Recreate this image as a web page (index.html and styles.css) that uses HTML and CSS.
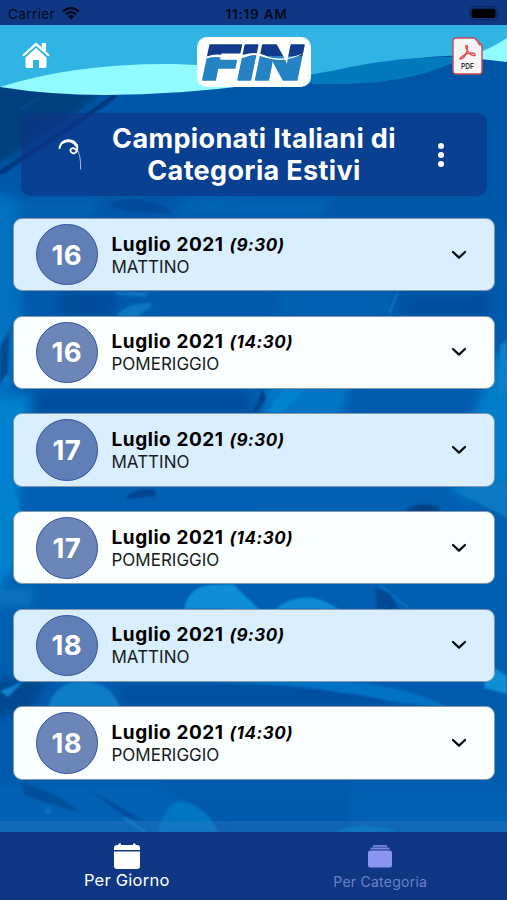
FILE: index.html
```
<!DOCTYPE html>
<html lang="it">
<head>
    <meta charset="UTF-8">
    <meta name="viewport" content="width=device-width, initial-scale=1.0">
    <title>Campionati Italiani di Categoria Estivi</title>
    <link rel="stylesheet" href="styles.css">
</head>
<body>
    <div class="app">
        <!-- Painted water backdrop and header waves -->
        <svg class="backdrop" viewBox="0 0 507 900" preserveAspectRatio="none" aria-hidden="true">
            <defs>
                <linearGradient id="water" x1="0" y1="0" x2="0" y2="1">
                    <stop offset="0" stop-color="#0054a4"/>
                    <stop offset=".25" stop-color="#0058aa"/>
                    <stop offset=".55" stop-color="#0260b2"/>
                    <stop offset="1" stop-color="#0058ab"/>
                </linearGradient>
                <filter id="soft" x="-20%" y="-20%" width="140%" height="140%"><feGaussianBlur stdDeviation="5"/></filter>
                <filter id="edge"><feGaussianBlur stdDeviation="0.8"/></filter>
            </defs>
            <rect width="507" height="900" fill="url(#water)"/>
            <g filter="url(#soft)">
                <path d="M-10 80H112L66 125 -10 170Z" fill="#00407f"/>
                <path d="M-10 190L18 200 22 310 10 410 -10 460Z" fill="#0470bf"/>
                <path d="M20 200L100 200 90 218 20 218Z" fill="#0462b2"/>
                <path d="M190 196L330 200 320 218H170Z" fill="#0263b4"/>
                <path d="M60 292H115V316H60Z" fill="#004c9b"/>
                <path d="M35 390H250V413H35Z" fill="#014f9f"/>
                <path d="M268 385L350 387 340 416 262 415Z" fill="#0577c6"/>
                <path d="M350 387H480V414H350Z" fill="#015cad"/>
                <path d="M-10 400L30 395 18 500 20 560 -10 600Z" fill="#0580cd"/>
                <path d="M495 350L517 370V480L470 500 450 488Z" fill="#057bc9"/>
                <path d="M-10 590L35 588 30 606H-10Z" fill="#0773bf"/>
                <path d="M-10 680L50 678 30 710 -10 720Z" fill="#004a8e"/>
                <path d="M120 684L360 684 400 706 120 706Z" fill="#014f9f"/>
                <path d="M-10 785L160 785 220 832H-10Z" fill="#0262b4"/>
                <path d="M280 293L390 290 390 315 280 315Z" fill="#0262b3"/>
                <path d="M400 293H490V316H400Z" fill="#014f9f"/>
                <path d="M350 783H517V832H350Z" fill="#0260b2"/>
            </g>
            <g filter="url(#edge)">
                <path d="M116 95L66 130 0 173" fill="none" stroke="#003474" stroke-width="4"/>
                <path d="M104 97L50 131 0 165M40 97L20 110" fill="none" stroke="#07569e" stroke-width="1.2"/>
                <path d="M108 205Q125 195 148 201Q166 205 172 213L130 212Z" fill="#004c9a"/>
                <path d="M116 316Q128 302 152 303L150 308 136 317Z" fill="#0877c1"/>
                <path d="M115 292H150L145 297 118 295Z" fill="#0872bd"/>
                <path d="M398 292L389 314M9 328Q-2 350 6 382" fill="none" stroke="#1587cc" stroke-width="1.2"/>
                <path d="M10 327L0 348V384L8 372Z" fill="#014b91"/>
                <path d="M262 388L266 398 258 412H252L258 402Z" fill="#003f89"/>
                <path d="M284 389L304 391 282 412H268Z" fill="#0583cd"/>
                <path d="M500 345L507 340V390L498 398Z" fill="#087fcb"/>
                <path d="M126 497Q142 485 156 491L155 496 128 499Z" fill="#004590"/>
                <path d="M404 511Q418 500 440 507L438 513Z" fill="#004283"/>
                <path d="M452 490L507 480V518L492 510Z" fill="#0779c5"/>
                <path d="M0 480Q20 490 20 515L8 530 0 532Z" fill="#0682cd"/>
                <path d="M184 609Q188 587 210 585L233 584 260 610Z" fill="#078dd7"/>
                <path d="M275 609Q305 585 340 610Z" fill="#078bd7"/>
                <path d="M212 586L240 609M226 585L257 609M380 585L408 608" fill="none" stroke="#1c95d9" stroke-width="1"/>
                <path d="M375 588L390 593 398 609H377Z" fill="#004892"/>
                <path d="M48 708Q54 682 82 681Q111 681 120 708Z" fill="#087bc4"/>
                <path d="M205 682Q375 668 448 708L390 701Q300 682 205 682Z" fill="#0472c3"/>
                <path d="M488 664L507 676V694L484 688Z" fill="#0b8ed6"/>
                <path d="M0 691L24 681 8 697Z" fill="#0a81cc"/>
                <path d="M22 783Q60 793 80 813L60 807 24 795Z" fill="#014f9a"/>
                <path d="M90 790L146 822 125 817Z" fill="#014e9c"/>
                <path d="M158 832Q166 802 181 801Q202 803 219 832Z" fill="#0475c2"/>
                <path d="M336 832Q361 819 398 832Z" fill="#0678bf"/>
                <circle cx="48" cy="811" r="3.5" fill="#0771bd"/>
                <path d="M124 818L145 832" fill="none" stroke="#0c7bc5" stroke-width="3"/>
            </g>
            <rect y="821" width="507" height="11" fill="#3c7fc4" opacity=".28"/>
            <path d="M0 25H507V58Q455 52 400 61L311 76 230 86 0 87Z" fill="#2fb4e4"/>
            <path d="M0 87Q75 63 175 64L260 68V84Q180 95 105 95Q50 95 0 87Z" fill="#91fbff"/>
            <path d="M260 82Q315 75 350 67Q405 56 452 57L507 58V62L482 58 455 62Q425 76 386 81Q340 87 290 82Z" fill="#0278bd"/>
            <path d="M455 62L483 58 507 62V70H440Z" fill="#0055a5"/>
            <path d="M475 54Q490 49 507 38V62L480 59Z" fill="#91fbff"/>
        </svg>

        <div class="status-bar">
            <div class="carrier">
                <span>Carrier</span>
                <svg width="18" height="13" viewBox="0 0 18 13">
                    <path d="M1 4.4Q9-2.4 17 4.4M3.8 7.4Q9 3 14.2 7.4" fill="none" stroke="#020a1b" stroke-width="2.2"/>
                    <path d="M5.8 9.2Q9 6.6 12.2 9.2L9 12.5Z" fill="#020a1b"/>
                </svg>
            </div>
            <div class="clock">11:19 AM</div>
            <svg class="battery" width="31" height="15" viewBox="0 0 31 15">
                <rect x=".7" y=".7" width="27" height="13" rx="4" fill="none" stroke="#0b2860" stroke-width="1.3"/>
                <rect x="2.5" y="2.7" width="24" height="9.4" rx="2" fill="#000"/>
                <path d="M29 5Q31 7 29 10Z" fill="#0b2860"/>
            </svg>
        </div>

        <header class="header">
            <svg class="home-icon" width="30" height="28" viewBox="0 0 30 28" fill="#fff">
                <path d="M4.5 16.5L15 7 25.5 16.5V25Q25.5 27 23.5 27H18V20Q18 19 17 19H13Q12 19 12 20V27H6.5Q4.5 27 4.5 25Z"/>
                <path d="M1.3 14L14 2.2Q15 1.4 16 2.2L20.8 6.6V2H25V10.6L28.7 14 27.4 15.4 15 4.7 2.6 15.4Z"/>
            </svg>
            <div class="logo">
                <svg width="114" height="49" viewBox="0 0 114 49">
                    <defs>
                        <linearGradient id="logo-fill" gradientUnits="userSpaceOnUse" x1="0" y1="0" x2="0" y2="49">
                            <stop offset=".37" stop-color="#123b8d"/>
                            <stop offset=".37" stop-color="#2583c3"/>
                        </linearGradient>
                    </defs>
                    <text class="logo-text" x="6" y="41.5" textLength="99" lengthAdjust="spacingAndGlyphs" fill="url(#logo-fill)" stroke="url(#logo-fill)">FIN</text>
                    <path d="M10 18.5Q18 15 28 17.5Q38 20 45 17L52 15.5Q60 14 67 17Q83 25 107 15Q88 26 68 19.5Q56 15.5 49 19Q38 23 26 20Q17 18 10 20.5Z" fill="#fff"/>
                </svg>
            </div>
            <svg class="pdf-icon" width="32" height="38" viewBox="0 0 32 38">
                <path d="M4 1H22.5L30 8.5V34Q30 37 27 37H4Q1 37 1 34V4Q1 1 4 1Z" fill="#f5f5f6" stroke="#cf4652" stroke-width="1.4"/>
                <path d="M22.5 1L30 8.5H27Z" fill="#e25a60"/>
                <path d="M14.5 8.5C12.5 8.5 15 14 17.5 16.5S24 19.5 23 17.2 14 16 10 19.5 8.5 22.5 11 21 17.5 8.5 14.5 8.5Z" fill="none" stroke="#e34b4d" stroke-width="1.4"/>
                <text class="pdf-text" x="9" y="32" textLength="13" lengthAdjust="spacingAndGlyphs">PDF</text>
            </svg>
        </header>

        <section class="event-title">
            <svg class="swirl" width="26" height="34" viewBox="0 0 26 34" fill="none" stroke="#fff" stroke-linecap="round">
                <path d="M1.5 10Q3 2.5 10 2.2Q17 2 19 8" stroke-width="2"/>
                <path d="M5 5Q13 1 18 8" stroke-width="1.6"/>
                <path d="M19 7Q20.5 14 16 15.5Q12 15 12.5 11.5Q15 8 19 13" stroke-width="1.8"/>
                <path d="M18 10Q23.5 17 22.5 31" stroke-width=".9" opacity=".7"/>
            </svg>
            <h1>Campionati Italiani di<br>Categoria Estivi</h1>
            <div class="menu-dots"><span></span><span></span><span></span></div>
        </section>

        <main class="day-list">
            <div class="day-card morning">
                <div class="day-number">16</div>
                <div class="day-info">
                    <div class="day-date">Luglio 2021 <em>(9:30)</em></div>
                    <div class="day-part">MATTINO</div>
                </div>
                <svg class="chevron" width="16" height="10" viewBox="0 0 16 10"><path d="M2 2L8 7.6 14 2"/></svg>
            </div>
            <div class="day-card">
                <div class="day-number">16</div>
                <div class="day-info">
                    <div class="day-date">Luglio 2021 <em>(14:30)</em></div>
                    <div class="day-part">POMERIGGIO</div>
                </div>
                <svg class="chevron" width="16" height="10" viewBox="0 0 16 10"><path d="M2 2L8 7.6 14 2"/></svg>
            </div>
            <div class="day-card morning">
                <div class="day-number">17</div>
                <div class="day-info">
                    <div class="day-date">Luglio 2021 <em>(9:30)</em></div>
                    <div class="day-part">MATTINO</div>
                </div>
                <svg class="chevron" width="16" height="10" viewBox="0 0 16 10"><path d="M2 2L8 7.6 14 2"/></svg>
            </div>
            <div class="day-card">
                <div class="day-number">17</div>
                <div class="day-info">
                    <div class="day-date">Luglio 2021 <em>(14:30)</em></div>
                    <div class="day-part">POMERIGGIO</div>
                </div>
                <svg class="chevron" width="16" height="10" viewBox="0 0 16 10"><path d="M2 2L8 7.6 14 2"/></svg>
            </div>
            <div class="day-card morning">
                <div class="day-number">18</div>
                <div class="day-info">
                    <div class="day-date">Luglio 2021 <em>(9:30)</em></div>
                    <div class="day-part">MATTINO</div>
                </div>
                <svg class="chevron" width="16" height="10" viewBox="0 0 16 10"><path d="M2 2L8 7.6 14 2"/></svg>
            </div>
            <div class="day-card">
                <div class="day-number">18</div>
                <div class="day-info">
                    <div class="day-date">Luglio 2021 <em>(14:30)</em></div>
                    <div class="day-part">POMERIGGIO</div>
                </div>
                <svg class="chevron" width="16" height="10" viewBox="0 0 16 10"><path d="M2 2L8 7.6 14 2"/></svg>
            </div>
        </main>

        <nav class="tab-bar">
            <div class="tab active">
                <svg width="28" height="27" viewBox="0 0 28 27" fill="#fff">
                    <path d="M1 7V5Q1 2 4 2H5.5V.5H8V2H20V.5H22.5V2H24Q27 2 27 5V7Z"/>
                    <path d="M1 8.5H27V23Q27 26 24 26H4Q1 26 1 23Z"/>
                </svg>
                <span>Per Giorno</span>
            </div>
            <div class="tab">
                <svg width="26" height="24" viewBox="0 0 26 24">
                    <path d="M6 1H20V3H6Z" fill="#6f7bd0"/>
                    <path d="M4 3.5H22L23 5.5H3Z" fill="#7985dc"/>
                    <rect x="1" y="6.5" width="24" height="17" rx="2.5" fill="#8b95ef"/>
                </svg>
                <span>Per Categoria</span>
            </div>
        </nav>
    </div>
</body>
</html>
```
FILE: styles.css
```
* {
    box-sizing: border-box;
}

body {
    margin: 0;
    font-family: Inter, "Liberation Sans", sans-serif;
    background-color: #0058ab;
    color: #000;
}

svg {
    display: block;
    flex-shrink: 0;
}

.app {
    position: relative;
    isolation: isolate;
    display: flex;
    flex-direction: column;
    height: 900px;
    overflow: hidden;
}

.backdrop {
    position: absolute;
    top: 0;
    left: 0;
    width: 100%;
    height: 100%;
    z-index: -1;
}

.status-bar {
    display: grid;
    grid-template-columns: 1fr auto 1fr;
    align-items: center;
    height: 25px;
    padding: 2px 7px 0 8px;
    background-color: #103784;
    color: #020a1b;
    font-size: 13.5px;
    letter-spacing: 0.4px;
}

.carrier {
    display: flex;
    align-items: center;
    gap: 7px;
}

.clock {
    padding-left: 5px;
    font-size: 13.5px;
    font-weight: 600;
    letter-spacing: 0.8px;
}

.battery {
    justify-self: end;
}

.header {
    display: grid;
    grid-template-columns: 1fr auto 1fr;
    align-items: start;
    height: 88px;
    padding: 12px 23px 0 21px;
}

.home-icon {
    margin-top: 4px;
}

.logo {
    width: 114px;
    margin-left: 3px;
    border-radius: 10px;
    background-color: #fff;
}

.logo svg {
    margin-top: 1px;
    overflow: visible;
}

.logo-text {
    font-size: 48px;
    font-weight: 900;
    font-style: italic;
    stroke-width: 1.6;
    stroke-linejoin: round;
}

.pdf-icon {
    justify-self: end;
}

.pdf-text {
    font-size: 8px;
    font-weight: 600;
    fill: #333;
}

.event-title {
    display: flex;
    align-items: center;
    height: 83px;
    margin: 0 20px 0 21px;
    padding: 0 43px 0 37px;
    border-radius: 10px;
    background-color: rgba(14, 52, 134, 0.65);
}

.event-title h1 {
    flex: 1;
    margin: 0 14px 0 0;
    color: #fff;
    font-size: 27px;
    line-height: 32px;
    font-weight: 700;
    letter-spacing: 0.35px;
    text-align: center;
    white-space: nowrap;
}

.menu-dots {
    display: flex;
    flex-direction: column;
    gap: 3px;
}

.menu-dots span {
    width: 6px;
    height: 6px;
    border-radius: 50%;
    background-color: #fff;
}

.day-list {
    flex: 1;
    display: flex;
    flex-direction: column;
    gap: 24.3px;
    padding: 22px 12.5px 0 13px;
}

.day-card {
    display: flex;
    align-items: center;
    height: 73.4px;
    padding: 0 27px 0 22px;
    border: 1px solid #8399aa;
    border-radius: 9px;
    background-color: #fafeff;
}

.day-card.morning {
    background-color: #d9eeff;
}

.day-number {
    display: flex;
    align-items: center;
    justify-content: center;
    width: 61.5px;
    height: 61.5px;
    border: 1.5px solid #3452a0;
    border-radius: 50%;
    background-color: #6c86b8;
    color: #fff;
    font-size: 27.5px;
    font-weight: 700;
    letter-spacing: 0.3px;
}

.morning .day-number {
    background-color: #607fb7;
}

.day-info {
    flex: 1;
    padding-left: 14px;
}

.day-date {
    font-size: 19px;
    line-height: 23px;
    font-weight: 700;
    letter-spacing: 0.55px;
}

.day-date em {
    margin-left: 1px;
    font-size: 17px;
}

.day-part {
    color: #161c20;
    font-size: 17px;
    line-height: 20px;
}

.chevron {
    fill: none;
    stroke: #050a0e;
    stroke-width: 2.3;
    stroke-linecap: round;
    stroke-linejoin: round;
}

.tab-bar {
    display: grid;
    grid-template-columns: 1fr 1fr;
    height: 68px;
    background-color: #103784;
}

.tab {
    display: flex;
    flex-direction: column;
    align-items: center;
    gap: 4px;
    padding-top: 12px;
    color: #6b80ca;
    font-size: 14px;
    line-height: 20px;
    letter-spacing: 0.25px;
}

.tab.active {
    gap: 0;
    padding-top: 11px;
    color: #fff;
    font-size: 16.5px;
}
```
